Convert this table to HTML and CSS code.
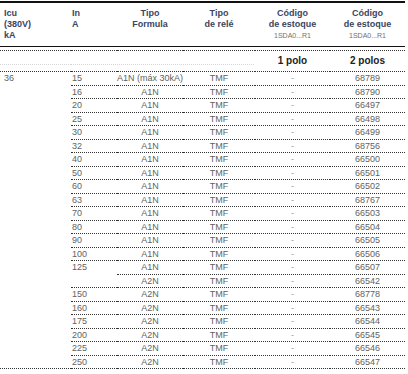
FILE: index.html
```html
<!DOCTYPE html>
<html lang="pt">
<head>
<meta charset="utf-8">
<title>Tabela de códigos</title>
<link rel="stylesheet" href="styles.css">
</head>
<body>
<table class="spec">
  <colgroup>
    <col class="c1"><col class="c2"><col class="c3"><col class="c4"><col class="c5"><col class="c6">
  </colgroup>
  <thead>
    <tr class="head">
      <th class="left first">Icu<br>(380V)<br>kA</th>
      <th class="left second">In<br>A</th>
      <th>Tipo<br>Formula</th>
      <th>Tipo<br>de relé</th>
      <th>Código<br>de estoque<br><span class="ref">1SDA0...R1</span></th>
      <th>Código<br>de estoque<br><span class="ref">1SDA0...R1</span></th>
    </tr>
    <tr class="gap"><td colspan="6"></td></tr>
    <tr class="sub">
      <td class="blank"></td>
      <td class="blank"></td>
      <td class="blank"></td>
      <td class="blank"></td>
      <td class="pole">1 polo</td>
      <td class="pole">2 polos</td>
    </tr>
  </thead>
  <tbody>
    <tr><td class="icu" rowspan="22">36</td><td class="in">15</td><td>A1N (máx 30kA)</td><td>TMF</td><td class="dash">-</td><td>68789</td></tr>
    <tr><td class="in">16</td><td>A1N</td><td>TMF</td><td class="dash">-</td><td>68790</td></tr>
    <tr><td class="in">20</td><td>A1N</td><td>TMF</td><td class="dash">-</td><td>66497</td></tr>
    <tr><td class="in">25</td><td>A1N</td><td>TMF</td><td class="dash">-</td><td>66498</td></tr>
    <tr><td class="in">30</td><td>A1N</td><td>TMF</td><td class="dash">-</td><td>66499</td></tr>
    <tr><td class="in">32</td><td>A1N</td><td>TMF</td><td class="dash">-</td><td>68756</td></tr>
    <tr><td class="in">40</td><td>A1N</td><td>TMF</td><td class="dash">-</td><td>66500</td></tr>
    <tr><td class="in">50</td><td>A1N</td><td>TMF</td><td class="dash">-</td><td>66501</td></tr>
    <tr><td class="in">60</td><td>A1N</td><td>TMF</td><td class="dash">-</td><td>66502</td></tr>
    <tr><td class="in">63</td><td>A1N</td><td>TMF</td><td class="dash">-</td><td>68767</td></tr>
    <tr><td class="in">70</td><td>A1N</td><td>TMF</td><td class="dash">-</td><td>66503</td></tr>
    <tr><td class="in">80</td><td>A1N</td><td>TMF</td><td class="dash">-</td><td>66504</td></tr>
    <tr><td class="in">90</td><td>A1N</td><td>TMF</td><td class="dash">-</td><td>66505</td></tr>
    <tr><td class="in">100</td><td>A1N</td><td>TMF</td><td class="dash">-</td><td>66506</td></tr>
    <tr><td class="in" rowspan="2">125</td><td>A1N</td><td>TMF</td><td class="dash">-</td><td>66507</td></tr>
    <tr><td>A2N</td><td>TMF</td><td class="dash">-</td><td>66542</td></tr>
    <tr><td class="in">150</td><td>A2N</td><td>TMF</td><td class="dash">-</td><td>68778</td></tr>
    <tr><td class="in">160</td><td>A2N</td><td>TMF</td><td class="dash">-</td><td>66543</td></tr>
    <tr><td class="in">175</td><td>A2N</td><td>TMF</td><td class="dash">-</td><td>66544</td></tr>
    <tr><td class="in">200</td><td>A2N</td><td>TMF</td><td class="dash">-</td><td>66545</td></tr>
    <tr><td class="in">225</td><td>A2N</td><td>TMF</td><td class="dash">-</td><td>66546</td></tr>
    <tr><td class="in">250</td><td>A2N</td><td>TMF</td><td class="dash">-</td><td>66547</td></tr>
  </tbody>
</table>
</body>
</html>
```
FILE: styles.css
```css
html, body {
  margin: 0;
  padding: 0;
  background: #ffffff;
}

body {
  font-family: "Liberation Sans", Arial, Helvetica, sans-serif;
}

.spec {
  margin-top: 1px;
  width: 405px;
  table-layout: fixed;
  border-collapse: separate;
  border-spacing: 0;
  font-size: 9px;
  color: #626262;
}

.c1 { width: 71px; }
.c2 { width: 46px; }
.c3 { width: 66px; }
.c4 { width: 72px; }
.c5 { width: 75px; }
.c6 { width: 75px; }

.head th {
  border-top: 2px solid #111111;
  border-bottom: 1px solid #111111;
  padding: 5px 0 5px 0;
  line-height: 11px;
  font-size: 9px;
  font-weight: bold;
  color: #3b4560;
  text-align: center;
  vertical-align: top;
  white-space: nowrap;
}

.head th.left { text-align: left; }
.head th.first { padding-left: 4px; }
.head th.second { padding-left: 1px; }

.ref {
  font-size: 7px;
  font-weight: normal;
  color: #707070;
}

.gap td {
  height: 3px;
  padding: 0;
  line-height: 0;
  font-size: 0;
}

.sub td {
  padding: 0;
  height: 20px;
  line-height: 20px;
  border-top: 1px dotted #333333;
  border-bottom: 1px dotted #333333;
}

.sub td.blank {
  background-image: repeating-linear-gradient(90deg, #d6d6d6 0 1px, transparent 1px 2px);
  background-size: 100% 1px;
  background-position: 0 13px;
  background-repeat: no-repeat;
}

.sub td.pole {
  text-align: center;
  font-size: 10px;
  font-weight: bold;
  color: #222222;
}

tbody td {
  padding: 0;
  line-height: 12.5px;
  border-bottom: 1px dotted #333333;
  text-align: center;
  white-space: nowrap;
}

tbody td.icu {
  vertical-align: top;
  text-align: left;
  padding-left: 4px;
}

tbody td.in {
  vertical-align: top;
  text-align: left;
  padding-left: 1px;
}

tbody td.dash {
  color: #9a9a9a;
}
```
